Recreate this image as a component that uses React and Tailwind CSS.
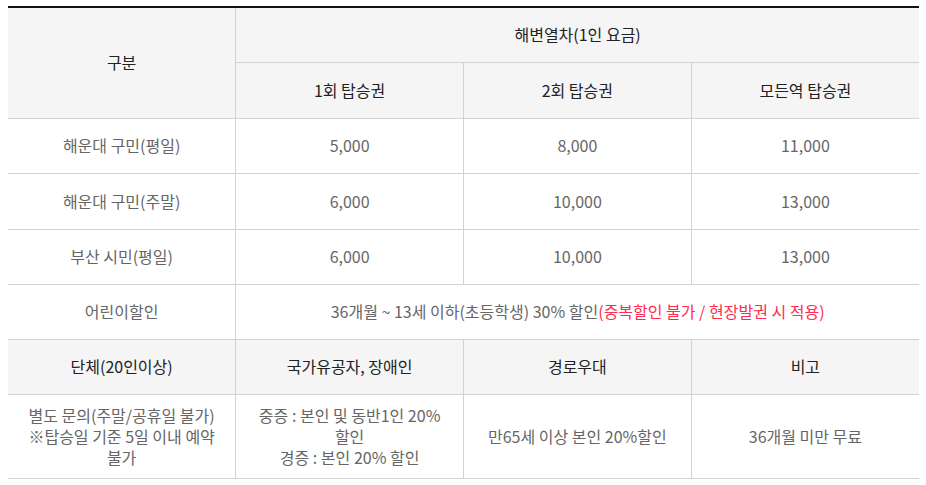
import React from 'react';

const rows = [
  ['해운대 구민(평일)', '5,000', '8,000', '11,000'],
  ['해운대 구민(주말)', '6,000', '10,000', '13,000'],
  ['부산 시민(평일)', '6,000', '10,000', '13,000'],
];

const th = 'border border-[#d2d2d2] bg-[#f5f5f5] text-[#222] font-normal text-center align-middle';
const td = 'border border-[#d2d2d2] text-[#666] text-center align-middle px-[10px] break-keep';

export default function App() {
  return (
    <div className="pt-[6px] pl-[8px] bg-white min-h-[485px]" style={{ fontFamily: '"Noto Sans CJK KR", "Noto Sans", sans-serif' }}>
      <table className="w-[911px] table-fixed border-collapse text-[16px] leading-[21px] border-t-2 border-t-[#111]">
        <colgroup>
          <col className="w-1/4" />
          <col className="w-1/4" />
          <col className="w-1/4" />
          <col className="w-1/4" />
        </colgroup>
        <thead>
          <tr className="h-[55px]">
            <th rowSpan={2} className={`${th} border-l-0 border-t-2 border-t-[#111]`}>구분</th>
            <th colSpan={3} className={`${th} border-r-0 border-t-2 border-t-[#111]`}>해변열차(1인 요금)</th>
          </tr>
          <tr className="h-[56px]">
            <th className={th}>1회 탑승권</th>
            <th className={th}>2회 탑승권</th>
            <th className={`${th} border-r-0`}>모든역 탑승권</th>
          </tr>
        </thead>
        <tbody>
          {rows.map((r, i) => (
            <tr key={i} className={i === 1 ? 'h-[56px]' : 'h-[55px]'}>
              {r.map((c, j) => (
                <td key={j} className={`${td} ${j === 0 ? 'border-l-0' : ''} ${j === 3 ? 'border-r-0' : ''}`}>{c}</td>
              ))}
            </tr>
          ))}
          <tr className="h-[55px]">
            <td className={`${td} border-l-0`}>어린이할인</td>
            <td colSpan={3} className={`${td} border-r-0`}>
              36개월 ~ 13세 이하(초등학생) 30% 할인<span className="text-[#ff2d4b]">(중복할인 불가 / 현장발권 시 적용)</span>
            </td>
          </tr>
          <tr className="h-[55px]">
            <th className={`${th} font-bold border-l-0`}>단체(20인이상)</th>
            <th className={`${th} font-bold`}>국가유공자, 장애인</th>
            <th className={`${th} font-bold`}>경로우대</th>
            <th className={`${th} font-bold border-r-0`}>비고</th>
          </tr>
          <tr className="h-[84px]">
            <td className={`${td} border-l-0`}>별도 문의(주말/공휴일 불가)<br />※탑승일 기준 5일 이내 예약 불가</td>
            <td className={td}>중증 : 본인 및 동반1인 20% 할인<br />경증 : 본인 20% 할인</td>
            <td className={td}>만65세 이상 본인 20%할인</td>
            <td className={`${td} border-r-0`}>36개월 미만 무료</td>
          </tr>
        </tbody>
      </table>
    </div>
  );
}
